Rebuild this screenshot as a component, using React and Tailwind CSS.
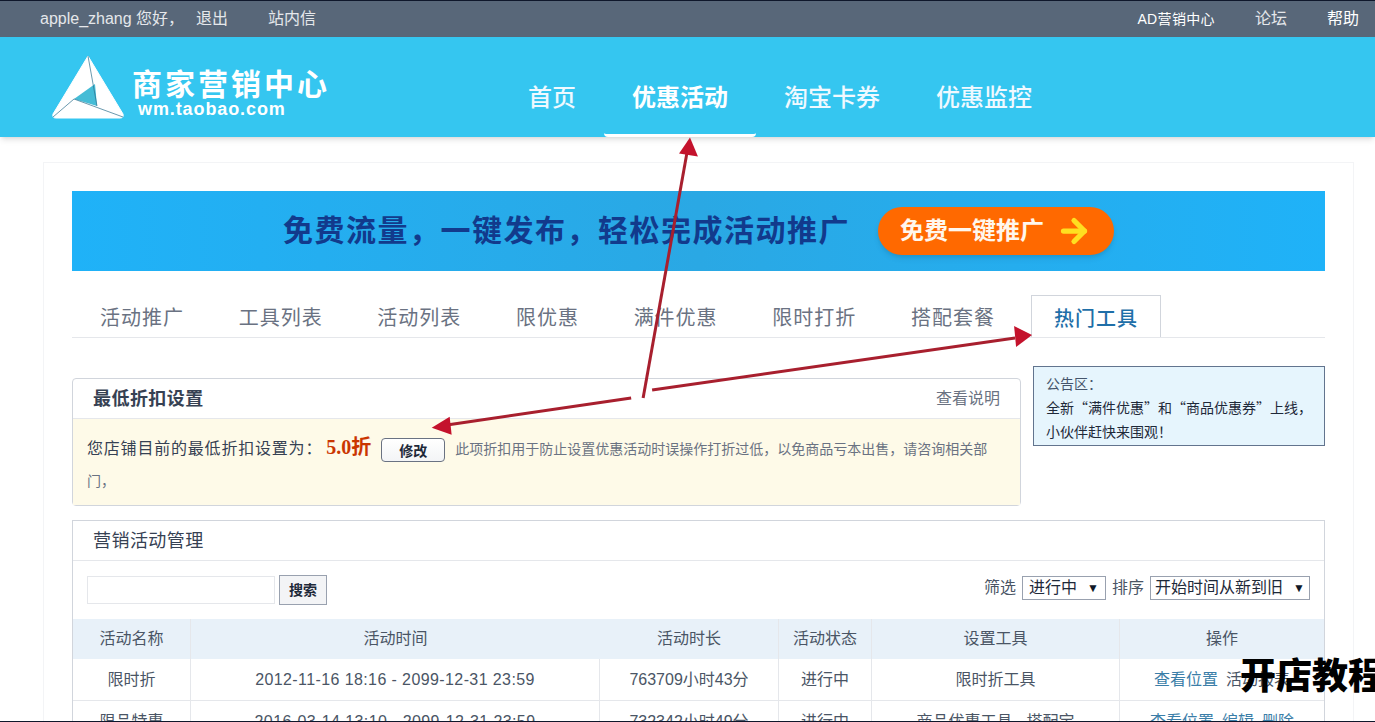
import React from 'react'
import { ArrowRight } from 'lucide-react'

const tabs = ['活动推广', '工具列表', '活动列表', '限优惠', '满件优惠', '限时打折', '搭配套餐']

function Logo() {
  return (
    <svg width="72" height="64" viewBox="0 0 72 64">
      <path d="M36 1 L71 59 Q72 63 68 63 L4 63 Q0 63 1 59 Z" fill="#fff" stroke="#fff" strokeLinejoin="round" />
      <path d="M22 44 L43 29 L45 51 Z" fill="#45bcd6" />
      <path d="M36 1 L45 51 M22 44 L1 62 M22 44 L71 62" fill="none" stroke="#2b6f8c" strokeWidth="0.7" />
    </svg>
  )
}

function Arrows() {
  return (
    <svg className="absolute inset-0 w-full h-full pointer-events-none" viewBox="0 0 1375 722">
      <g stroke="#a81f2e" strokeWidth="3" fill="none">
        <path d="M643 398 L687 152" />
        <path d="M631 398 L448 425" />
        <path d="M652 390 L1016 338" />
      </g>
      <path d="M690 137 L698 156 L679 153 Z" fill="#c4122c" />
      <path d="M431 428 L449 417 L451 435 Z" fill="#c4122c" />
      <path d="M1033 335 L1015 326 L1017 347 Z" fill="#c4122c" />
    </svg>
  )
}

function Row({ name, time, length, status, tool, ops }) {
  return (
    <div className="grid grid-cols-[118px_409px_179px_93px_248px_1fr] h-10.5 shrink-0 text-base text-gray-600 text-center border-b border-gray-200 items-stretch">
      <div className="flex items-center justify-center border-r border-gray-200">{name}</div>
      <div className="flex items-center justify-center border-r border-gray-200 tracking-wide">{time}</div>
      <div className="flex items-center justify-center border-r border-gray-200">{length}</div>
      <div className="flex items-center justify-center border-r border-gray-200">{status}</div>
      <div className="flex items-center justify-center border-r border-gray-200">{tool}</div>
      <div className="flex items-center justify-center gap-2">{ops}</div>
    </div>
  )
}

export default function App() {
  return (
    <div className="relative h-screen overflow-hidden bg-white border-y border-slate-900 font-['Liberation_Sans','Noto_Sans_CJK_SC',sans-serif]">
      {/* top bar */}
      <div className="h-9 flex items-center justify-between pl-10 pr-4 bg-[#586779] text-base text-gray-200">
        <div className="flex items-center">
          <span>apple_zhang 您好，</span>
          <span className="ml-3">退出</span>
          <span className="ml-10">站内信</span>
        </div>
        <div className="flex items-center gap-10">
          <span className="text-sm tracking-wide text-white">AD营销中心</span>
          <span>论坛</span>
          <span className="text-white">帮助</span>
        </div>
      </div>

      {/* header */}
      <div className="h-25 flex pl-13 bg-[#35c6f0] shadow-md">
        <div className="flex items-center w-112 gap-2">
          <Logo />
          <div className="text-white font-bold mt-4">
            <div className="text-3xl leading-7 tracking-widest">商家营销中心</div>
            <div className="text-lg leading-5 tracking-wider pl-1.5">wm.taobao.com</div>
          </div>
        </div>
        <nav className="flex text-2xl text-sky-50 font-medium">
          <a className="flex items-center px-7 pt-6 border-b-3 border-transparent">首页</a>
          <a className="flex items-center px-7 pt-6 border-b-3 border-white rounded-b-sm text-white font-bold">优惠活动</a>
          <a className="flex items-center px-7 pt-6 border-b-3 border-transparent">淘宝卡券</a>
          <a className="flex items-center px-7 pt-6 border-b-3 border-transparent">优惠监控</a>
        </nav>
      </div>

      {/* page */}
      <div className="ml-11 mr-5.5 mt-6.5 px-7 pt-7 ring-1 ring-gray-100">
        <div className="h-20 flex items-center justify-center gap-7 bg-gradient-to-r from-[#1fb2f8] via-[#2aa8e4] to-[#1fb2f8]">
          <span className="text-3xl tracking-wider font-bold text-[#123a8c]">免费流量，一键发布，轻松完成活动推广</span>
          <span className="w-59 h-12 flex items-center justify-center gap-3 rounded-full bg-orange-500 shadow-md">
            <span className="text-2xl font-bold text-orange-50">免费一键推广</span>
            <ArrowRight className="w-9 h-9 text-yellow-300" strokeWidth={3.5} />
          </span>
        </div>

        {/* tabs */}
        <div className="mt-6 flex border-b border-gray-200">
          <div className="flex-1 flex justify-between pl-7 pr-9 text-xl tracking-wider text-gray-500">
            {tabs.map(t => (
              <span key={t} className="h-10.5 pt-1 flex items-center">{t}</span>
            ))}
          </div>
          <div className="h-10.5 pt-1 -mb-px mr-41 px-5.5 flex items-center bg-white border border-b-0 border-gray-300 text-xl tracking-wider font-medium text-[#1f6fa8]">
            热门工具
          </div>
        </div>

        {/* discount + notice */}
        <div className="mt-7 flex gap-3 items-start">
          <div className="flex-1 mt-3 border border-gray-300 rounded-sm">
            <div className="h-10 flex items-center justify-between px-5 border-b border-gray-200">
              <span className="text-lg tracking-wide font-bold text-gray-700">最低折扣设置</span>
              <span className="text-base text-gray-500">查看说明</span>
            </div>
            <div className="h-21.5 px-3.5 pt-3.5 bg-[#fefae8] text-gray-500 text-sm leading-8">
              <span className="text-base tracking-wider text-gray-700">您店铺目前的最低折扣设置为：</span>
              <span className="ml-1 text-xl font-bold text-orange-700 font-['Liberation_Serif','Noto_Sans_CJK_SC',serif]">5.0折</span>
              <span className="inline-block mx-2.5 w-16 h-6 leading-6 text-center align-middle rounded-sm border border-gray-500 bg-gradient-to-b from-white to-gray-100 font-bold text-gray-800">修改</span>
              此项折扣用于防止设置优惠活动时误操作打折过低，以免商品亏本出售，请咨询相关部门，
            </div>
          </div>
          <div className="w-73 h-20 px-3 py-1 bg-[#e6f5fd] border border-slate-500 text-sm leading-6 text-gray-800 whitespace-nowrap font-['Noto_Sans_CJK_SC',sans-serif]">
            <div className="text-slate-600">公告区：</div>
            <div>全新“满件优惠”和“商品优惠券”上线，</div>
            <div>小伙伴赶快来围观！</div>
          </div>
        </div>

        {/* campaign table */}
        <div className="mt-3.5 border border-gray-300">
          <div className="h-10 flex items-center px-5 border-b border-gray-200 text-lg tracking-wide text-gray-700">营销活动管理</div>
          <div className="h-14.5 flex items-center justify-between px-3.5">
            <div className="flex items-center gap-1">
              <div className="w-47 h-7 border border-gray-200" />
              <div className="w-12 h-7.5 flex items-center justify-center border border-gray-400 bg-gray-100 text-sm font-bold text-gray-800">搜索</div>
            </div>
            <div className="flex items-center gap-1.5 -mt-1 text-base text-gray-600">
              <span>筛选</span>
              <div className="w-21 h-6 flex items-center justify-between px-1.5 border border-gray-400 text-gray-800">
                进行中<span className="text-xs text-gray-900">▼</span>
              </div>
              <span>排序</span>
              <div className="w-40 h-6 flex items-center justify-between px-1 border border-gray-400 text-gray-800">
                开始时间从新到旧<span className="text-xs text-gray-900">▼</span>
              </div>
            </div>
          </div>
          <div className="grid grid-cols-[118px_409px_179px_93px_248px_1fr] h-10 bg-[#e8f1f9] text-base text-gray-600 text-center">
            <div className="flex items-center justify-center border-r border-gray-200">活动名称</div>
            <div className="flex items-center justify-center">活动时间</div>
            <div className="flex items-center justify-center border-r border-gray-200">活动时长</div>
            <div className="flex items-center justify-center border-r border-gray-200">活动状态</div>
            <div className="flex items-center justify-center border-r border-gray-200">设置工具</div>
            <div className="flex items-center justify-center">操作</div>
          </div>
          <Row
            name="限时折"
            time="2012-11-16 18:16 - 2099-12-31 23:59"
            length="763709小时43分"
            status="进行中"
            tool="限时折工具"
            ops={<><a className="text-[#3b7ea8]">查看位置</a><span>活动报表</span></>}
          />
          <Row
            name="限品特惠"
            time="2016-03-14 13:10 - 2099-12-31 23:59"
            length="732342小时49分"
            status="进行中"
            tool="商品优惠工具 · 搭配宝"
            ops={<><a className="text-[#3b7ea8]">查看位置</a><a className="text-[#3b7ea8]">编辑</a><a className="text-[#3b7ea8]">删除</a></>}
          />
        </div>
      </div>

      <Arrows />
      <div className="absolute left-[1240px] top-163 text-4xl font-black text-black whitespace-nowrap font-['Noto_Sans_CJK_SC',sans-serif]">开店教程</div>
    </div>
  )
}
